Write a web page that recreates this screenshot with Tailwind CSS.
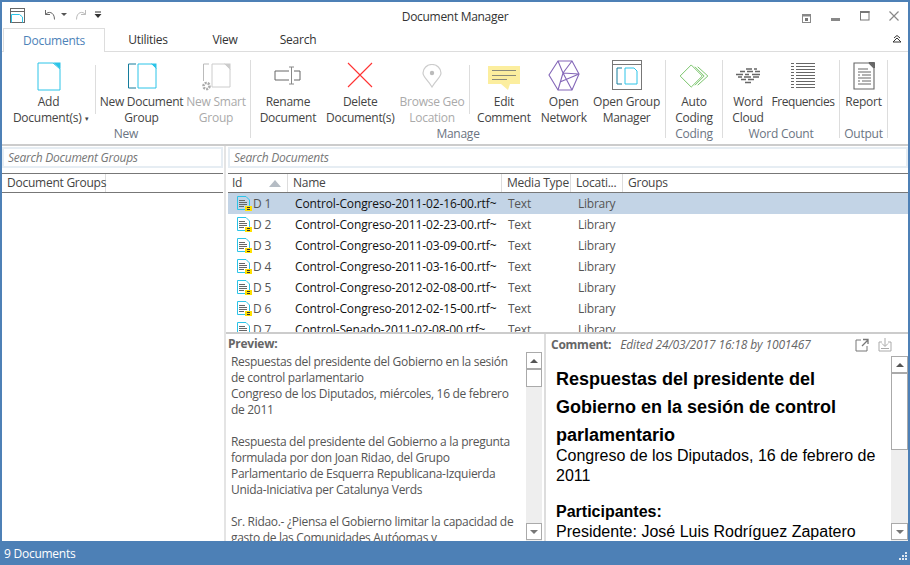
<!DOCTYPE html>
<html lang="es">
<head>
    <meta charset="UTF-8">
    <title>Document Manager</title>
    <script src="https://cdn.jsdelivr.net/npm/@tailwindcss/browser@4"></script>
</head>
<body class="bg-white overflow-hidden">
<div class="w-[910px] h-[565px] flex flex-col border-x-2 border-t-2 border-[#4d80b6] bg-white text-[12px] leading-[16px] text-[#444] font-['Open_Sans',sans-serif] tracking-[-0.25px] overflow-hidden">

    <!-- Title bar -->
    <header class="h-[26px] shrink-0 flex items-center relative">
        <svg class="ml-[8px] mt-[1px]" width="16" height="16" viewBox="0 0 16 16" fill="none">
            <rect x="0.5" y="0.5" width="14" height="14" stroke="#666"/>
            <path d="M0.5 3.5H14.5" stroke="#666"/>
            <path d="M1.5 14.5V6.5H9.5L12.5 9V14.5" stroke="#2cc4e8" fill="none"/>
        </svg>
        <svg class="ml-[17px]" width="13" height="12" viewBox="0 0 13 12" fill="none"><path d="M2.5 1V5.5H7M2.5 5.5C5 2 11.5 2.5 11.5 10.5" stroke="#666"/></svg>
        <svg class="ml-[5px]" width="6" height="4" viewBox="0 0 6 4"><path d="M0 0H6L3 3Z" fill="#555"/></svg>
        <svg class="ml-[8px]" width="13" height="12" viewBox="0 0 13 12" fill="none"><path d="M10.5 1V5.5H6M10.5 5.5C8 2 1.5 2.5 1.5 10.5" stroke="#bbb"/></svg>
        <svg class="ml-[6px]" width="8" height="8" viewBox="0 0 8 8"><path d="M1 1H7" stroke="#333"/><path d="M0.5 3H7.5L4 7Z" fill="#333"/></svg>
        <div class="absolute left-0 right-0 top-[7px] text-center text-[#333] tracking-[-0.3px] pointer-events-none">Document Manager</div>
        <div class="ml-auto flex items-center">
            <svg class="mr-[19px] mt-[8px]" width="10" height="10" viewBox="0 0 10 10"><rect x="0.5" y="0.5" width="8" height="8" fill="none" stroke="#888"/><rect x="0" y="0" width="9" height="2.5" fill="#888"/><rect x="3" y="4" width="3" height="3" fill="#777"/></svg>
            <div class="w-[9px] h-[3px] bg-[#888] mr-[20px] mt-[9px]"></div>
            <svg class="mr-[19px] mt-[1px]" width="10" height="10" viewBox="0 0 10 10"><rect x="0.5" y="0.5" width="8.5" height="8.5" fill="none" stroke="#777"/><rect x="0" y="0" width="9.5" height="2" fill="#777"/></svg>
            <svg class="mr-[9px] mt-[1px]" width="10" height="10" viewBox="0 0 10 10"><path d="M0.5 0.5L9.5 9.5M9.5 0.5L0.5 9.5" stroke="#888" stroke-width="1.2"/></svg>
        </div>
    </header>

    <!-- Tabs -->
    <nav class="h-[24px] shrink-0 flex border-b border-[#ddd] relative">
        <div class="ml-[1px] w-[102px] h-[24px] pt-[1px] border border-b-0 border-[#ddd] bg-white flex items-center justify-center text-[#4d82b8]">Documents</div>
        <div class="w-[86px] pt-[1px] flex items-center justify-center text-[#333]">Utilities</div>
        <div class="w-[68px] pt-[1px] flex items-center justify-center text-[#333]">View</div>
        <div class="w-[78px] pt-[1px] flex items-center justify-center text-[#333]">Search</div>
        <svg class="absolute right-[6px] top-[7px]" width="10" height="9" viewBox="0 0 10 9" fill="none"><path d="M1 7L5 3L9 7H1Z M2 3L5 0.5L8 3" stroke="#333"/></svg>
    </nav>

    <!-- Ribbon -->
    <section class="h-[94px] shrink-0 flex border-b-2 border-[#ccc] pt-[8px] text-center">

        <!-- New -->
        <div class="w-[249px] h-[78px] shrink-0 border-r border-[#ddd] flex relative">
            <div class="w-[93px] flex flex-col items-center">
                <div class="h-[34px]"><svg class="mt-[2px]" width="24" height="30" viewBox="0 0 24 30" fill="none"><path d="M1 1H16L23 7V28H1Z" stroke="#2cc4e8"/><path d="M16 0.5H23.5V7Z" fill="#2cc4e8"/></svg></div>
                <div>Add<br><span class="pl-[5px] whitespace-nowrap">Document(s) <span class="ml-[1px] text-[7px] align-[1px]">▾</span></span></div>
            </div>
            <div class="w-[93px] flex flex-col items-center">
                <div class="h-[34px]"><svg class="mt-[3px]" width="30" height="26" viewBox="0 0 30 26" fill="none"><path d="M9 1H1.5V25H9" stroke="#147c9c"/><path d="M11 1H25L29 5V25H11Z" stroke="#2cc4e8"/><path d="M24 0.5H29.5V6Z" fill="#2cc4e8"/></svg></div>
                <div class="whitespace-nowrap">New Document<br>Group</div>
            </div>
            <div class="w-[56px] flex flex-col items-center text-[#aaa]">
                <div class="h-[34px]"><svg class="mt-[3px]" width="30" height="28" viewBox="0 0 30 28" fill="none"><path d="M8 1H2.5V18" stroke="#bbb"/><path d="M11 1H24L29 6V24H11Z" stroke="#ccc"/><path d="M23 0.5H29.5V7Z" fill="#ccc"/><circle cx="5.5" cy="23" r="3" stroke="#aaa" stroke-width="2.6" stroke-dasharray="2 1"/></svg></div>
                <div class="whitespace-nowrap">New Smart<br>Group</div>
            </div>
            <div class="absolute bottom-[-4px] left-0 right-0 text-[#6b7482]">New</div>
            <div class="absolute left-[93px] top-[5px] w-px h-[49px] bg-[#ddd]"></div>
        </div>

        <!-- Manage -->
        <div class="w-[415px] h-[78px] shrink-0 border-r border-[#ddd] flex relative">
            <div class="w-[74px] flex flex-col items-center">
                <div class="h-[34px]"><svg class="mt-[6px]" width="28" height="20" viewBox="0 0 28 20" fill="none"><path d="M15 5H1V14H15M20 5H26V14H20" stroke="#666"/><path d="M15 1H20M17.5 1V18M15 18H20" stroke="#888"/></svg></div>
                <div class="whitespace-nowrap">Rename<br>Document</div>
            </div>
            <div class="w-[71px] flex flex-col items-center">
                <div class="h-[34px]"><svg class="mt-[2px]" width="26" height="26" viewBox="0 0 26 26"><path d="M1 1L25 25M25 1L1 25" stroke="#f33" stroke-width="1.1"/></svg></div>
                <div class="whitespace-nowrap">Delete<br>Document(s)</div>
            </div>
            <div class="w-[73px] flex flex-col items-center text-[#aaa]">
                <div class="h-[34px]"><svg class="mt-[4px]" width="20" height="24" viewBox="0 0 20 24" fill="none"><path d="M10 23C6 16 1 13 1 9A9 8.5 0 0 1 19 9C19 13 14 16 10 23Z" stroke="#ccc" stroke-width="1.2"/><circle cx="10" cy="9" r="2.2" fill="#bbb"/></svg></div>
                <div class="whitespace-nowrap">Browse Geo<br>Location</div>
            </div>
            <div class="w-[71px] flex flex-col items-center">
                <div class="h-[34px]"><svg class="mt-[6px]" width="32" height="24" viewBox="0 0 32 24"><path d="M0 0H32V18H22L20 24L13 18H0Z" fill="#fcee9e"/><path d="M4 4.5H28M4 9.5H28M4 13.5H19" stroke="#8a8a7a"/></svg></div>
                <div class="whitespace-nowrap">Edit<br>Comment</div>
            </div>
            <div class="w-[49px] flex flex-col items-center">
                <div class="h-[34px]"><svg width="32" height="32" viewBox="0 0 32 32" fill="none" stroke="#8467b8" stroke-width="1.1"><path d="M10 1H24L31 14L24 30H10L1 15Z"/><path d="M10 1L15 13L10 30M15 13L24 30M15 13L24 1M15 13L31 14M12 22L31 14"/></svg></div>
                <div class="whitespace-nowrap">Open<br>Network</div>
            </div>
            <div class="w-[77px] flex flex-col items-center">
                <div class="h-[34px]"><svg width="30" height="30" viewBox="0 0 30 30" fill="none"><rect x="0.5" y="0.5" width="29" height="29" stroke="#777"/><path d="M0 4.5H30" stroke="#777"/><path d="M10 8H5V24H10" stroke="#147c9c"/><path d="M13 8H22L25 11V24H13Z" stroke="#2cc4e8"/></svg></div>
                <div class="whitespace-nowrap">Open Group<br>Manager</div>
            </div>
            <div class="absolute bottom-[-4px] left-0 right-0 text-[#6b7482]">Manage</div>
            <div class="absolute left-[218px] top-[5px] w-px h-[49px] bg-[#ddd]"></div>
        </div>

        <!-- Coding -->
        <div class="w-[57px] h-[78px] shrink-0 border-r border-[#ddd] flex flex-col items-center relative">
            <div class="h-[34px]"><svg class="mt-[4px]" width="32" height="24" viewBox="0 0 32 26" fill="none" stroke="#6fbf5f"><path d="M13 1L25 13L13 25L1 13Z"/><path d="M17 3L27 13L17 23M20 3L31 13L20 23"/></svg></div>
            <div>Auto<br>Coding</div>
            <div class="absolute bottom-[-4px] left-0 right-0 text-[#6b7482]">Coding</div>
        </div>

        <!-- Word Count -->
        <div class="w-[117px] h-[78px] shrink-0 border-r border-[#ddd] flex relative">
            <div class="w-[50px] flex flex-col items-center">
                <div class="h-[34px]"><svg class="mt-[8px]" width="26" height="16" viewBox="0 0 26 16" stroke="#666" stroke-width="1.5"><path d="M11 1H17M19 1H22M5 3.5H10M12 3.5H18M20 3.5H25M1 6.5H8M10 6.5H14M17 6.5H25M3 9H7M9 9H16M18 9H24M6 11.5H11M13 11.5H19M10 14.5H16"/></svg></div>
                <div>Word<br>Cloud</div>
            </div>
            <div class="w-[60px] flex flex-col items-center">
                <div class="h-[34px]"><svg class="mt-[3px]" width="24" height="26" viewBox="0 0 24 26" stroke="#666"><path d="M0 .5H3M5 .5H24M0 3.5H3M5 3.5H24M0 6.5H3M5 6.5H24M0 9.5H3M5 9.5H24M0 12.5H3M5 12.5H24M0 15.5H3M5 15.5H24M0 18.5H3M5 18.5H24M0 21.5H3M5 21.5H24M0 24.5H3M5 24.5H24"/></svg></div>
                <div class="tracking-[-0.45px]">Frequencies</div>
            </div>
            <div class="absolute bottom-[-4px] left-0 right-0 text-[#6b7482]">Word Count</div>
        </div>

        <!-- Output -->
        <div class="w-[48px] h-[78px] shrink-0 border-r border-[#ddd] flex flex-col items-center relative">
            <div class="h-[34px]"><svg class="mt-[2px]" width="22" height="28" viewBox="0 0 22 28" fill="none" stroke="#666"><path d="M1 1H16L21 6V27H1Z" stroke-width="1.1"/><path d="M16 .5H21.5V6Z" fill="#666"/><path d="M5 7H15M5 10H18M5 13H7M9 13H18M5 16H18M5 19H7M9 19H18M5 22H18"/></svg></div>
            <div>Report</div>
            <div class="absolute bottom-[-4px] left-0 right-0 text-[#6b7482]">Output</div>
        </div>
    </section>

    <!-- Main -->
    <main class="flex-1 min-h-0 flex">
        <!-- Groups pane -->
        <div class="w-[224px] shrink-0 flex flex-col border-r-2 border-[#e4e4e4] pr-[1px]">
            <div class="h-[21px] mt-[1px] border-2 border-[#e6edf3] flex items-center pl-[4px] italic text-[#777]">Search Document Groups</div>
            <div class="h-[20px] mt-[5px] flex border-y border-[#777]">
                <div class="w-[104px] pl-[5px] border-r border-[#ddd] flex items-center whitespace-nowrap">Document Groups</div>
            </div>
        </div>

        <div class="flex-1 min-w-0 flex flex-col">
            <!-- Documents pane -->
            <div class="h-[188px] shrink-0 pl-[2px] flex flex-col overflow-hidden border-b-2 border-[#ccc]">
                <div class="h-[21px] shrink-0 mt-[1px] border-2 border-[#e6edf3] flex items-center pl-[4px] italic text-[#777]">Search Documents</div>
                <div class="h-[20px] mt-[5px] shrink-0 grid grid-cols-[60px_214px_69px_52px_1fr] border-y border-[#777]">
                    <div class="pl-[4px] border-r border-[#ddd] flex items-center justify-between pr-[6px]">Id <svg width="12" height="7" viewBox="0 0 12 7"><path d="M0 7L6 0L12 7Z" fill="#b5bcc4"/></svg></div>
                    <div class="pl-[5px] border-r border-[#ddd] flex items-center">Name</div>
                    <div class="pl-[5px] border-r border-[#ddd] flex items-center">Media Type</div>
                    <div class="pl-[5px] border-r border-[#ddd] flex items-center">Locati...</div>
                    <div class="pl-[5px] flex items-center">Groups</div>
                </div>
                <div id="rows" class="flex-1 min-h-0 overflow-hidden"></div>
            </div>

            <!-- Preview and comment -->
            <div class="flex-1 min-h-0 flex">
                <div class="w-[320px] shrink-0 flex flex-col border-r-2 border-[#ddd] min-h-0">
                    <div class="h-[18px] shrink-0 pl-[2px] pt-[2px] font-bold text-[#666]">Preview:</div>
                    <div class="flex-1 min-h-0 flex">
                        <div class="flex-1 pl-[5px] pt-[2px] text-[#555] tracking-[-0.3px] overflow-hidden">
                            <p>Respuestas del presidente del Gobierno en la sesión<br>de control parlamentario<br>Congreso de los Diputados, miércoles, 16 de febrero<br>de 2011</p>
                            <p class="mt-[16px]">Respuesta del presidente del Gobierno a la pregunta<br>formulada por don Joan Ridao, del Grupo<br>Parlamentario de Esquerra Republicana-Izquierda<br>Unida-Iniciativa per Catalunya Verds</p>
                            <p class="mt-[16px]">Sr. Ridao.- ¿Piensa el Gobierno limitar la capacidad de<br>gasto de las Comunidades Autóomas y</p>
                        </div>
                        <div class="w-[16px] mr-[2px] shrink-0 bg-[#eee] flex flex-col justify-between">
                            <div>
                                <div class="h-[17px] border border-[#aaa] bg-white flex items-center justify-center"><svg width="8" height="4" viewBox="0 0 8 4"><path d="M0 4L4 0L8 4Z" fill="#555"/></svg></div>
                                <div class="h-[18px] border border-[#aaa] bg-white"></div>
                            </div>
                            <div class="h-[17px] mb-[1px] border border-[#aaa] bg-white flex items-center justify-center"><svg width="8" height="4" viewBox="0 0 8 4"><path d="M0 0L8 0L4 4Z" fill="#777"/></svg></div>
                        </div>
                    </div>
                </div>
                <div class="flex-1 min-w-0 flex flex-col">
                    <div class="h-[22px] shrink-0 flex items-center pl-[5px] text-[#666]">
                        <span class="font-bold">Comment:</span>
                        <span class="italic ml-[9px] tracking-[-0.13px]">Edited 24/03/2017 16:18 by 1001467</span>
                        <svg class="ml-auto mr-[9px]" width="14" height="14" viewBox="0 0 14 14" fill="none" stroke="#777"><path d="M6 2H1V13H12V8"/><path d="M7 8L13 2M8 1.5H13V6" stroke-width="1.3"/></svg>
                        <svg class="mr-[16px]" width="14" height="14" viewBox="0 0 14 14" fill="none" stroke="#aaa"><path d="M4 4H1V13H13V4H10M7 0V8M4 5.5L7 8.5L10 5.5M3 10.5H11"/></svg>
                    </div>
                    <div class="flex-1 min-h-0 flex">
                        <div class="flex-1 pl-[10px] pt-[9px] overflow-hidden text-black font-['Liberation_Sans',sans-serif] text-[16px] tracking-normal leading-[20px]">
                            <div class="font-bold text-[18px] leading-[28px]">Respuestas del presidente del<br>Gobierno en la sesión de control<br>parlamentario</div>
                            <div class="-mt-[3px]">Congreso de los Diputados, 16 de febrero de<br>2011</div>
                            <div class="mt-[16px] font-bold">Participantes:</div>
                            <div>Presidente: José Luis Rodríguez Zapatero</div>
                        </div>
                        <div class="w-[17px] shrink-0 bg-[#eee] flex flex-col justify-between">
                            <div>
                                <div class="h-[17px] border border-[#aaa] bg-white flex items-center justify-center"><svg width="8" height="4" viewBox="0 0 8 4"><path d="M0 4L4 0L8 4Z" fill="#555"/></svg></div>
                                <div class="h-[77px] border border-[#aaa] bg-white"></div>
                            </div>
                            <div class="h-[17px] mb-[1px] border border-[#aaa] bg-white flex items-center justify-center"><svg width="8" height="4" viewBox="0 0 8 4"><path d="M0 0L8 0L4 4Z" fill="#777"/></svg></div>
                        </div>
                    </div>
                </div>
            </div>
        </div>
    </main>

    <!-- Status bar -->
    <footer class="h-[24px] shrink-0 -mx-[2px] pt-[1px] bg-[#4d80b6] text-white flex items-center pl-[4px] relative">
        9 Documents
        <svg class="absolute right-[3px] bottom-[3px]" width="10" height="10" viewBox="0 0 10 10" fill="#dfe8f2"><rect x="8" y="0" width="2" height="2"/><rect x="5" y="3" width="2" height="2"/><rect x="8" y="3" width="2" height="2"/><rect x="2" y="6" width="2" height="2"/><rect x="5" y="6" width="2" height="2"/><rect x="8" y="6" width="2" height="2"/></svg>
    </footer>
</div>

<script>
    const docs = [
        ["D 1", "Control-Congreso-2011-02-16-00.rtf~"],
        ["D 2", "Control-Congreso-2011-02-23-00.rtf~"],
        ["D 3", "Control-Congreso-2011-03-09-00.rtf~"],
        ["D 4", "Control-Congreso-2011-03-16-00.rtf~"],
        ["D 5", "Control-Congreso-2012-02-08-00.rtf~"],
        ["D 6", "Control-Congreso-2012-02-15-00.rtf~"],
        ["D 7", "Control-Senado-2011-02-08-00.rtf~"]
    ];
    document.getElementById("rows").innerHTML = docs.map((d, i) => `
        <div class="h-[21px] grid grid-cols-[60px_214px_69px_52px_1fr] items-center ${i === 0 ? "bg-[#c3d4e6]" : ""}">
            <div class="flex items-center pl-[9px] text-[#555] tracking-[-0.1px]">
                <svg class="mr-[1px] shrink-0" width="15" height="16" viewBox="0 0 15 16" fill="none">
                    <path d="M0.5 0.5H9L12.5 4V13.5H0.5Z" stroke="#2cc4e8"/>
                    <path d="M2 4.5H8M2 6.5H10M2 8.5H10M2 10.5H7" stroke="#666"/>
                    <rect x="8" y="10" width="7" height="5" fill="#ffe000"/>
                    <path d="M10 11.5H13M10 13.5H13" stroke="#333"/>
                </svg>
                ${d[0]}
            </div>
            <div class="pl-[7px] text-[#111] whitespace-nowrap tracking-[-0.13px]">${d[1]}</div>
            <div class="pl-[6px] text-[#555]">Text</div>
            <div class="pl-[7px] text-[#555]">Library</div>
            <div></div>
        </div>
    `).join("");
</script>
</body>
</html>
